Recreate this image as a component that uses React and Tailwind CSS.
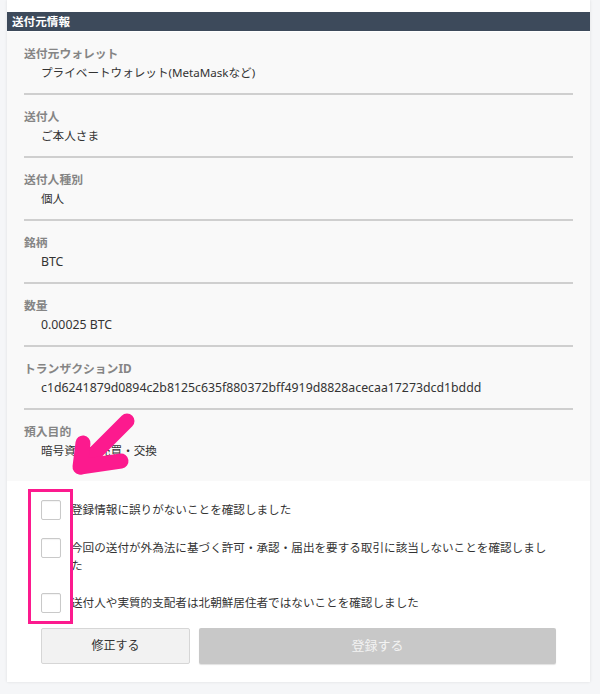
import React from "react";

const rows = [
  { label: "送付元ウォレット", value: "プライベートウォレット(MetaMaskなど)" },
  { label: "送付人", value: "ご本人さま" },
  { label: "送付人種別", value: "個人" },
  { label: "銘柄", value: "BTC", latin: true },
  { label: "数量", value: "0.00025 BTC", latin: true },
  {
    label: "トランザクションID",
    value: "c1d6241879d0894c2b8125c635f880372bff4919d8828acecaa17273dcd1bddd",
    latin: true,
  },
  { label: "預入目的", value: "暗号資産の売買・交換" },
];

const checks = [
  "登録情報に誤りがないことを確認しました",
  "今回の送付が外為法に基づく許可・承認・届出を要する取引に該当しないことを確認しました",
  "送付人や実質的支配者は北朝鮮居住者ではないことを確認しました",
];

const App = () => {
  return (
    <div
      className="relative w-[600px] h-[694px] overflow-hidden bg-[#f5f6f8] pl-[7px]"
      style={{ fontFamily: '"Noto Sans", "Noto Sans CJK JP", sans-serif' }}
    >
      <div className="w-[583px] bg-white pt-[12px] shadow-[0_0_3px_rgba(0,0,0,0.1)]">
        {/* header */}
        <div className="h-[20px] border-b border-white bg-[#3d4a5b] pl-[5px] text-[11.6px] font-bold leading-[19px] text-white">
          送付元情報
        </div>

        {/* info list */}
        <div className="bg-[#f9f9f9] px-[17px] pb-[10px]">
          {rows.map((row, i) => (
            <div
              key={row.label}
              className={
                i < rows.length - 1
                  ? "pt-[11px] pb-[10px] border-b-2 border-[#cfcfcf]"
                  : "pt-[11px] pb-[10px]"
              }
            >
              <div className="text-[11.8px] font-bold leading-[20px] text-[#858585]">
                {row.label}
              </div>
              <div
                className={
                  row.latin
                    ? "pl-[17px] text-[12.3px] leading-[20px] text-[#333]"
                    : "pl-[17px] text-[11.6px] leading-[20px] text-[#333]"
                }
              >
                {row.value}
              </div>
            </div>
          ))}
        </div>

        {/* confirmations */}
        <div className="px-[34px] pt-[19px] pb-[18px]">
          <div className="flex flex-col gap-[18px]">
            {checks.map((text) => (
              <label key={text} className="flex items-start gap-[10px]">
                <span className="h-5 w-5 shrink-0 rounded-[2px] border border-[#c9c9c9] bg-white shadow-[inset_0_1px_1px_rgba(0,0,0,0.05)]" />
                <span className="pt-[1px] text-[11.6px] leading-[18px] text-[#333]">
                  {text}
                </span>
              </label>
            ))}
          </div>

          <div className="mt-[15px] flex gap-[9px]">
            <button className="h-[36px] w-[149px] rounded-[2px] border border-[#d6d6d6] bg-[#f2f2f2] text-[12px] text-[#333]">
              修正する
            </button>
            <button className="h-[36px] flex-1 rounded-[2px] bg-[#c8c8c8] text-[13px] text-[#f3f3f3] shadow-[0_1px_1px_rgba(0,0,0,0.12)]">
              登録する
            </button>
          </div>
        </div>
      </div>

      {/* pink annotation */}
      <svg
        className="pointer-events-none absolute left-0 top-0"
        width="600"
        height="694"
        viewBox="0 0 600 694"
      >
        <rect
          x="29.5"
          y="490.5"
          width="42"
          height="132"
          fill="none"
          stroke="#fc1a8e"
          strokeWidth="3"
        />
        <g
          fill="none"
          stroke="#fc1a8e"
          strokeWidth="15"
          strokeLinecap="round"
          strokeLinejoin="round"
        >
          <path d="M127 421 L81 467" />
          <path d="M83 443 L80 467 L121 461" />
        </g>
      </svg>
    </div>
  );
};

export default App;
